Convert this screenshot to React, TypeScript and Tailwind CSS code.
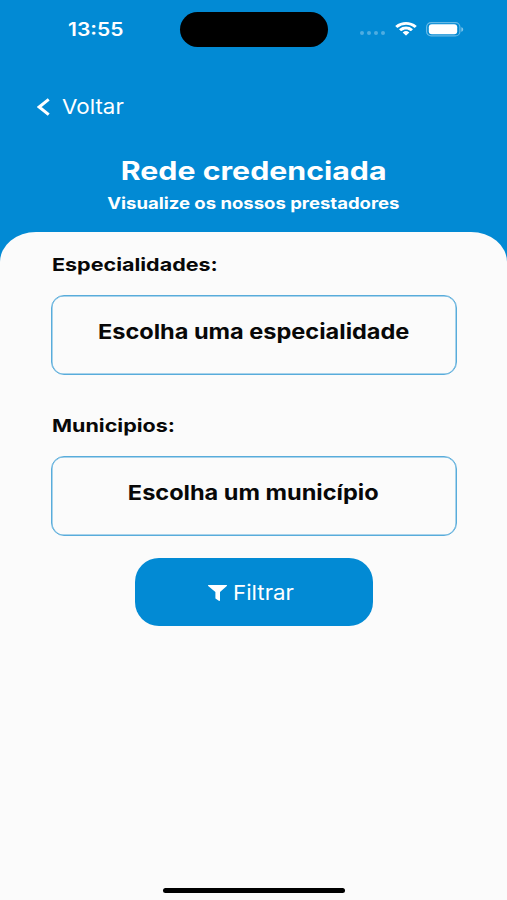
import React from "react";

function StatusBar() {
  return (
    <div className="flex h-[58px] items-center">
      <div className="w-[180px] pt-[2px] pl-[68px]">
        <span className="inline-block origin-left scale-x-[1.17] text-[18px] leading-[22px] font-semibold">13:55</span>
      </div>
      <div className="h-[35px] w-[148px] rounded-full bg-black" />
      <div className="flex items-center pl-[32px]">
        <div className="mt-[8px] flex gap-[3px]">
          <i className="h-[4px] w-[4px] rounded-full bg-white/30" />
          <i className="h-[4px] w-[4px] rounded-full bg-white/30" />
          <i className="h-[4px] w-[4px] rounded-full bg-white/30" />
          <i className="h-[4px] w-[4px] rounded-full bg-white/30" />
        </div>
        <svg className="ml-[10px] h-[14px] w-[22px]" viewBox="0 0 17 12" preserveAspectRatio="none" fill="#fff">
          <path d="M8.5 2.4c2.4 0 4.7.9 6.4 2.6.1.1.3.1.5 0l1.2-1.3c.2-.2.2-.4 0-.5C12.1-1 4.9-1 .4 3.200c-.2.1-.2.3 0 .5L1.600 5c.2.1.4.1.5 0A9.200 9.200 0 0 1 8.500 2.400Z" />
          <path d="M8.500 6.400c1.300 0 2.500.5 3.500 1.400.1.1.3.1.5 0l1.200-1.300c.2-.1.2-.3 0-.5a7.600 7.600 0 0 0-10.400 0c-.2.2-.2.4 0 .5l1.200 1.300c.2.1.4.1.5 0 1-.9 2.200-1.400 3.500-1.400Z" />
          <path d="M10.900 9.200c.2-.2.2-.4 0-.5a3.700 3.700 0 0 0-4.800 0c-.2.1-.2.3 0 .5l2.100 2.200c.2.2.4.2.6 0Z" />
        </svg>
        <svg className="ml-[9px] h-[15px] w-[38px]" viewBox="0 0 38 15" fill="none">
          <rect x="0.6" y="0.6" width="33.3" height="13.3" rx="4.5" stroke="#fff" strokeOpacity=".4" strokeWidth="1.2" />
          <rect x="2.8" y="2.300" width="28.4" height="10" rx="3" fill="#fff" />
          <path d="M35.300 5.200c1.300.4 1.900 1.200 1.900 2.200s-.6 1.900-1.900 2.300Z" fill="#fff" fillOpacity=".5" />
        </svg>
      </div>
    </div>
  );
}

function Field({ label, children }: { label: string; children: React.ReactNode }) {
  return (
    <section>
      <h3 className="h-[24px] pl-px text-[18px] leading-[24px] font-bold">
        <span className="inline-block origin-left scale-x-[1.195]">{label}</span>
      </h3>
      <button className="mt-[18px] flex h-[80px] w-[406px] justify-center rounded-[13px] border border-[#58acdb] pt-[23px] text-[20.5px] leading-[26px] font-bold whitespace-nowrap shadow-[inset_0_0_0_0.5px_#58acdb]">
        {children}
      </button>
    </section>
  );
}

export default function App() {
  return (
    <main className="flex h-[900px] w-[507px] flex-col overflow-hidden bg-[#028ad4] font-['Inter',sans-serif] text-white">
      <StatusBar />
      <button className="mt-[35px] ml-[37px] flex h-[28px] items-center text-left">
        <svg className="h-[18px] w-[13px]" viewBox="0 0 13 18" fill="none" stroke="#fff" strokeWidth="3">
          <path d="M11.700 1.300 2.200 9l9.500 7.700" />
        </svg>
        <span className="ml-[12px] inline-block origin-left scale-x-[1.09] text-[20.5px] leading-[28px]">Voltar</span>
      </button>
      <header className="mt-[34px] flex flex-col items-center whitespace-nowrap">
        <h1 className="scale-x-[1.212] text-[25px] leading-[32px] font-bold">Rede credenciada</h1>
        <h2 className="mt-[6px] scale-x-[1.157] text-[16px] leading-[20px] font-bold">Visualize os nossos prestadores</h2>
      </header>
      <div className="mt-[19px] flex flex-1 flex-col items-center rounded-t-[36px_30px] bg-[#fbfbfb] pt-[21px] text-[#080808]">
        <Field label="Especialidades:">
          <span className="inline-block scale-x-[1.148]">Escolha uma especialidade</span>
        </Field>
        <div className="mt-[39px]">
          <Field label="Municipios:">
            <span className="inline-block scale-x-[1.148]">Escolha um município</span>
          </Field>
        </div>
        <button className="mt-[22px] flex h-[68px] w-[238px] items-center rounded-[24px] bg-[#028ad4] pt-px pl-[73px] text-[20.5px] leading-[28px] text-white">
          <svg className="h-[16px] w-[19px]" viewBox="0 0 19 16" fill="#fff">
            <path d="M.6 0h17.800c.6 0 .8.5.4.9L12 7.100v8.100c0 .7-.6 1-1.200.6l-3-2.100a1 1 0 0 1-.4-.8V7.100L.2.9C-.2.5 0 0 .6 0Z" />
          </svg>
          <span className="ml-[6px] inline-block origin-left scale-x-[1.09]">Filtrar</span>
        </button>
        <div className="mt-auto mb-[7px] h-[5px] w-[182px] rounded-full bg-black" />
      </div>
    </main>
  );
}
